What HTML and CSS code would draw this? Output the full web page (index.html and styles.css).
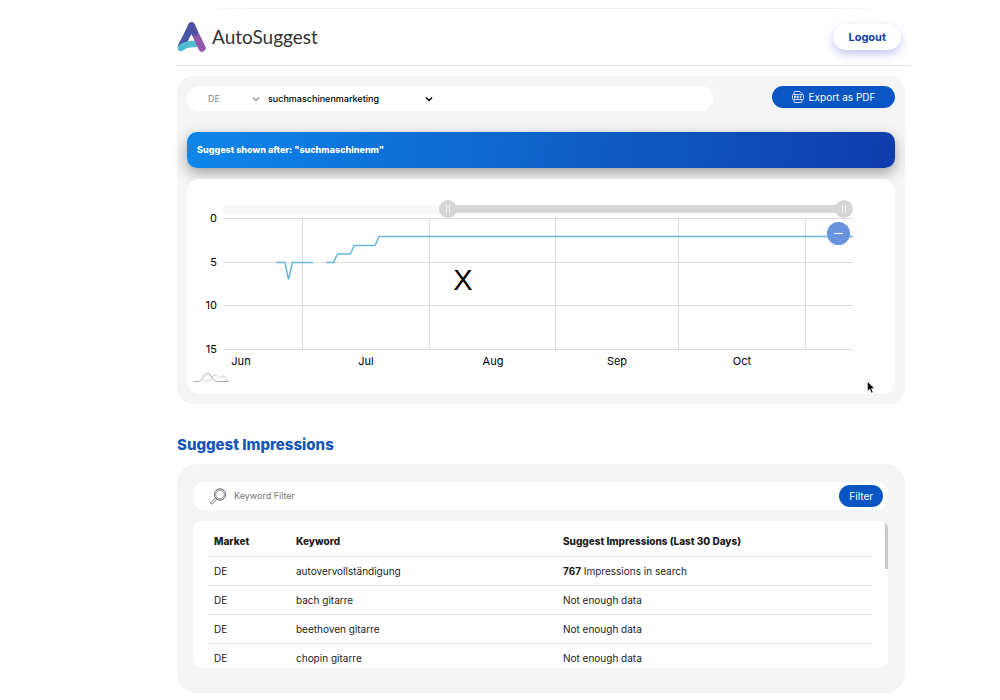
FILE: index.html
```html
<!DOCTYPE html>
<html lang="en">
<head>
  <meta charset="UTF-8" />
  <meta name="viewport" content="width=device-width, initial-scale=1.0"/>
  <title>AutoSuggest</title>
  <link rel="stylesheet" href="styles.css">
</head>
<body>
  <div class="page">

    <!-- Header -->
    <header class="header">
      <a class="logo" href="#">
        <svg width="29" height="30" viewBox="0 0 29 30" fill="none" stroke-linecap="round">
          <path d="M14.500 4L25 26" stroke="#9159a6" stroke-width="7"/>
          <path d="M14.500 4L4.500 24" stroke="#4b55a5" stroke-width="7"/>
          <path d="M14.500 4L17.500 10.500" stroke="#4f52a3" stroke-width="7"/>
          <path d="M3.800 26C8 22.500 12 21.500 18 22" stroke="#4fbdcf" stroke-width="6.500"/>
          <path d="M20.500 16.500L25 26" stroke="#9159a6" stroke-width="7"/>
        </svg>
        <span>AutoSuggest</span>
      </a>
      <button class="logout" type="button">Logout</button>
    </header>

    <main>
      <!-- Chart -->
      <section class="panel">
        <div class="toolbar">
          <div class="selects">
            <div class="select market">
              <select aria-label="Market"><option>DE</option></select>
              <svg width="8" height="6" viewBox="0 0 8 6"><path d="M1 1.500L4 4.500L7 1.500"/></svg>
            </div>
            <div class="select keyword">
              <select aria-label="Keyword"><option>suchmaschinenmarketing</option></select>
              <svg width="8" height="6" viewBox="0 0 8 6"><path d="M1 1.500L4 4.500L7 1.500"/></svg>
            </div>
          </div>
          <button class="btn export" type="button">
            <svg width="12" height="12" viewBox="0 0 12 12" fill="none" stroke="#fff" stroke-width=".8">
              <path d="M2 3.500V1.500Q2 .5 3 .5H8L10 2.500V3.500M2 8.500V10.500Q2 11.500 3 11.500H9Q10 11.500 10 10.500V8.500"/>
              <rect x=".5" y="3.500" width="11" height="5" rx="1"/>
              <path d="M2.500 7.500V5H3.800V6.300H2.500M5.200 5V7.200H6Q7 6 6 5H5.200M8.300 7.500V5H9.800M8.300 6.200H9.500"/>
            </svg>
            Export as PDF
          </button>
        </div>

        <div class="banner">Suggest shown after: "suchmaschinenm"</div>

        <div class="chart">
          <div class="range">
            <input type="range" min="0" max="100" step="0.1" value="35.3" aria-label="Range start">
            <input type="range" min="0" max="100" step="0.1" value="100" aria-label="Range end">
          </div>
          <svg class="plot" viewBox="0 0 708 176">
            <g class="grid">
              <path d="M36 .5H666M36 44.500H666M36 87.500H666M36 131.500H666"/>
              <path d="M115.500 0V131M242.500 0V131M368.500 0V131M491.500 0V131M618.500 0V131"/>
            </g>
            <g class="axis-y">
              <text x="30" y="4">0</text>
              <text x="30" y="48">5</text>
              <text x="30" y="91">10</text>
              <text x="30" y="135">15</text>
            </g>
            <g class="axis-x">
              <text x="54" y="147">Jun</text>
              <text x="179" y="147">Jul</text>
              <text x="306" y="147">Aug</text>
              <text x="430" y="147">Sep</text>
              <text x="555" y="147">Oct</text>
            </g>
            <path class="line" d="M89 44.500H98L101.500 61.500L105.500 44.500H126M139 44.500H146.500L150.500 36H163.500L167 27.500H188L192 18.500H666"/>
            <text class="mark" x="276" y="72">X</text>
            <g class="brand">
              <path d="M17 163H20C24 163 25 157 28 157C31 157 31 160 33 160C35 160 34 158 36 158C39 158 38 163 42 163" stroke="#ccc"/>
              <path d="M7 163.500H11C16 163.500 16 155.500 20.500 155.500C25 155.500 25 163.500 30 163.500H42" stroke="#aaa"/>
            </g>
          </svg>
          <button class="zoom-out" type="button" aria-label="Zoom out"></button>
          <svg class="cursor" width="8" height="13" viewBox="0 0 8 13">
            <path d="M.5 .5V10L2.700 8L4.500 12L6 11.300L4.400 7.500H7.500Z" fill="#000" stroke="#fff" stroke-width=".5"/>
          </svg>
        </div>
      </section>

      <!-- Impressions -->
      <h2>Suggest Impressions</h2>
      <section class="panel impressions">
        <form class="search">
          <svg width="17" height="17" viewBox="0 0 17 17" fill="none" stroke="#555">
            <circle cx="10" cy="6.500" r="5.700" stroke-width=".9"/>
            <circle cx="10" cy="6.500" r="4.300" stroke-width=".7"/>
            <path d="M5.500 10L6.700 11.300L2.500 15.700Q1.500 16.500 .8 15.700Q.2 14.900 1.200 14Z" stroke-width=".8"/>
          </svg>
          <input type="text" placeholder="Keyword Filter" aria-label="Keyword Filter">
          <button class="btn" type="submit">Filter</button>
        </form>

        <div class="table-box">
          <table>
            <thead>
              <tr><th class="col-market">Market</th><th class="col-keyword">Keyword</th><th>Suggest Impressions (Last 30 Days)</th></tr>
            </thead>
            <tbody>
              <tr><td>DE</td><td>autovervollständigung</td><td><b>767</b> Impressions in search</td></tr>
              <tr><td>DE</td><td>bach gitarre</td><td>Not enough data</td></tr>
              <tr><td>DE</td><td>beethoven gitarre</td><td>Not enough data</td></tr>
              <tr><td>DE</td><td>chopin gitarre</td><td>Not enough data</td></tr>
            </tbody>
          </table>
          <div class="scroll-thumb"></div>
        </div>
      </section>
    </main>
  </div>
</body>
</html>
```

FILE: styles.css
```css
* {
  box-sizing: border-box;
}

body {
  margin: 0;
  background: #fff;
  color: #1b1b1b;
  font-family: Inter, "Liberation Sans", sans-serif;
  font-size: 10px;
  line-height: 14px;
}

button,
input,
select {
  font: inherit;
}

.page {
  padding: 8px 95px 0 177px;
}

/* Header */
.header {
  display: flex;
  align-items: center;
  justify-content: space-between;
  height: 58px;
  margin: 0 -6px 10px -2px;
  padding: 0 10px 0 2px;
  border-bottom: 1px solid #e4e4e8;
  background: linear-gradient(90deg, transparent 4%, #f0f0f0 10%, #f0f0f0 90%, transparent 96%) top / 100% 1px no-repeat;
}

.logo {
  display: flex;
  align-items: center;
  gap: 6px;
  color: #333;
  font-family: Lato, sans-serif;
  font-size: 19px;
  line-height: 24px;
  text-decoration: none;
}

.logout {
  height: 26px;
  padding: 0 15px;
  border: none;
  border-radius: 13px;
  background: #fff;
  color: #1140ab;
  font-size: 11px;
  font-weight: 700;
  box-shadow: 0 4px 8px rgba(60, 70, 200, 0.3);
  cursor: pointer;
}

/* Panels */
.panel {
  padding: 10px;
  border-radius: 16px;
  background: #f5f5f5;
}

.toolbar {
  display: flex;
  align-items: flex-start;
  justify-content: space-between;
  gap: 59px;
}

.selects {
  display: flex;
  flex: 1;
  height: 25px;
  padding-left: 21px;
  border-radius: 12px;
  background: #fff;
}

.select {
  position: relative;
  color: #000;
}

.select select {
  width: 100%;
  height: 25px;
  padding: 0;
  border: none;
  background: none;
  color: inherit;
  font-size: 9px;
  font-weight: 500;
  appearance: none;
}

.select svg {
  position: absolute;
  top: 10px;
  right: 0;
  fill: none;
  stroke: currentColor;
  stroke-width: 1.5;
  pointer-events: none;
}

.market {
  width: 52px;
  margin-right: 8px;
  color: #999;
}

.keyword {
  width: 165px;
}

.btn {
  display: flex;
  align-items: center;
  justify-content: center;
  height: 22px;
  padding: 0 10px;
  border: none;
  border-radius: 11px;
  background: #0a55c4;
  color: #fff;
  cursor: pointer;
}

.export {
  gap: 5px;
  width: 123px;
}

.banner {
  margin: 21px 0 11px;
  padding: 11px 10px;
  border-radius: 10px;
  background: linear-gradient(100deg, #0d86ea, #0f3dab);
  color: #fff;
  font-size: 9px;
  font-weight: 800;
  box-shadow: 0 5px 14px rgba(0, 0, 0, 0.35);
}

/* Chart */
.chart {
  position: relative;
  padding-top: 21px;
  border-radius: 12px;
  background: #fff;
}

.range {
  position: relative;
  height: 18px;
  margin: 0 42px 0 36px;
  background: linear-gradient(90deg, #f8f8f8 36%, #d6d6d6 36%, #d6d6d6 98%, transparent 98%) center / 100% 8px no-repeat;
}

.range input {
  position: absolute;
  top: 0;
  left: 0;
  width: 100%;
  height: 18px;
  margin: 0;
  background: none;
  appearance: none;
  pointer-events: none;
}

.range input::-webkit-slider-thumb {
  width: 18px;
  height: 18px;
  border: none;
  border-radius: 50%;
  background:
    linear-gradient(#f5f5f5, #f5f5f5) 7px 5px / 1px 8px no-repeat,
    linear-gradient(#f5f5f5, #f5f5f5) 10px 5px / 1px 8px no-repeat,
    #d6d6d6;
  appearance: none;
  pointer-events: auto;
}

.plot {
  display: block;
  width: 100%;
  overflow: visible;
  font-size: 11px;
}

.grid {
  fill: none;
  stroke: #ddd;
}

.axis-y {
  text-anchor: end;
}

.axis-x {
  text-anchor: middle;
}

.line {
  fill: none;
  stroke: #67b7dc;
  stroke-width: 1.5;
}

.mark {
  font-family: "Liberation Sans", Arial, sans-serif;
  font-size: 29px;
  text-anchor: middle;
}

.brand {
  fill: none;
}

.zoom-out {
  position: absolute;
  top: 43px;
  right: 45px;
  width: 23px;
  height: 23px;
  border: none;
  border-radius: 50%;
  background: linear-gradient(#fff, #fff) center / 9px 1px no-repeat #6794dc;
  cursor: pointer;
}

.cursor {
  position: absolute;
  right: 20px;
  bottom: 0;
}

/* Impressions */
h2 {
  margin: 31px 0 9px;
  color: #1455bb;
  font-size: 15px;
  font-weight: 800;
  line-height: 20px;
}

.impressions {
  padding: 18px 17px 25px 16px;
  border-radius: 20px;
}

.search {
  display: flex;
  align-items: center;
  height: 28px;
  margin-bottom: 11px;
  padding: 0 5px 0 17px;
  border-radius: 10px;
  background: #fff;
}

.search input {
  flex: 1;
  padding: 0 7px;
  border: none;
  outline: none;
  background: none;
  font-size: 9px;
}

.search input::placeholder {
  color: #757575;
}

.table-box {
  position: relative;
  height: 147px;
  padding: 6px 15px 0 14px;
  border-radius: 8px;
  background: #fff;
  overflow: hidden;
}

table {
  width: 100%;
  border-collapse: collapse;
  table-layout: fixed;
}

th,
td {
  height: 29px;
  padding: 0 7px;
  border-bottom: 1px solid #e2e4e6;
  text-align: left;
}

th {
  font-weight: 800;
}

.col-market {
  width: 82px;
}

.col-keyword {
  width: 267px;
}

.scroll-thumb {
  position: absolute;
  top: 0;
  right: 0;
  width: 3px;
  height: 48px;
  background: #c8c8c8;
}
```
